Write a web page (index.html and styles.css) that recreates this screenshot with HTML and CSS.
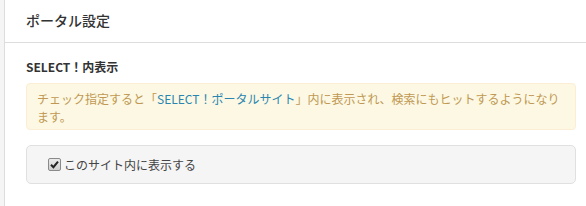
FILE: index.html
```html
<!DOCTYPE html>
<html lang="ja">
<head>
    <meta charset="UTF-8">
    <title>ポータル設定</title>
    <link rel="stylesheet" href="styles.css">
</head>
<body>
    <div class="panel">
        <div class="panel-heading">
            <h3>ポータル設定</h3>
        </div>
        <div class="panel-body">
            <h4 class="field-title">SELECT！内表示</h4>
            <div class="alert">
                チェック指定すると「<a href="#">SELECT！ポータルサイト</a>」内に表示され、検索にもヒットするようになります。
            </div>
            <div class="well">
                <label class="check-label">
                    <span class="check-box">
                        <svg width="9" height="9" viewBox="0 0 9 9">
                            <path d="M1 4.8 L3.4 7.2 L8 1.6" fill="none" stroke="#222" stroke-width="2"/>
                        </svg>
                    </span>
                    このサイト内に表示する
                </label>
            </div>
        </div>
    </div>
</body>
</html>
```

FILE: styles.css
```css
body {
    margin: 0;
    padding: 0 0 0 4px;
    background-color: #f5f5f5;
    font-family: "Noto Sans CJK JP", "Noto Sans", sans-serif;
    color: #333;
    overflow: hidden;
}
.panel {
    background-color: #fff;
    border-left: 1px solid #ddd;
    height: 206px;
}
.panel-heading {
    padding: 10px 21px 12px;
    border-bottom: 1px solid #ddd;
}
.panel-heading h3 {
    margin: 0;
    font-size: 14px;
    line-height: 20px;
    font-weight: 500;
    color: #333;
}
.panel-body {
    padding: 15px 10px 0 21px;
}
.field-title {
    margin: 0 0 7px;
    font-size: 12px;
    line-height: 18px;
    font-weight: bold;
    color: #333;
}
.alert {
    padding: 6px 8px 3px 10px;
    font-size: 12px;
    line-height: 18px;
    color: #c09853;
    background-color: #fcf8e3;
    border: 1px solid #fbeed5;
    border-radius: 4px;
}
.alert a {
    color: #2a86b0;
    text-decoration: none;
}
.well {
    margin-top: 15px;
    padding: 10px 21px;
    background-color: #f5f5f5;
    border: 1px solid #e0e0e0;
    border-radius: 5px;
}
.check-label {
    display: flex;
    align-items: center;
    gap: 3px;
    font-size: 12px;
    line-height: 17px;
    color: #444;
}
.check-box {
    display: inline-flex;
    align-items: center;
    justify-content: center;
    width: 11px;
    height: 11px;
    border: 1px solid #8a8a8a;
    border-radius: 2px;
    background: linear-gradient(#eaeaea, #cfcfcf);
}
```
